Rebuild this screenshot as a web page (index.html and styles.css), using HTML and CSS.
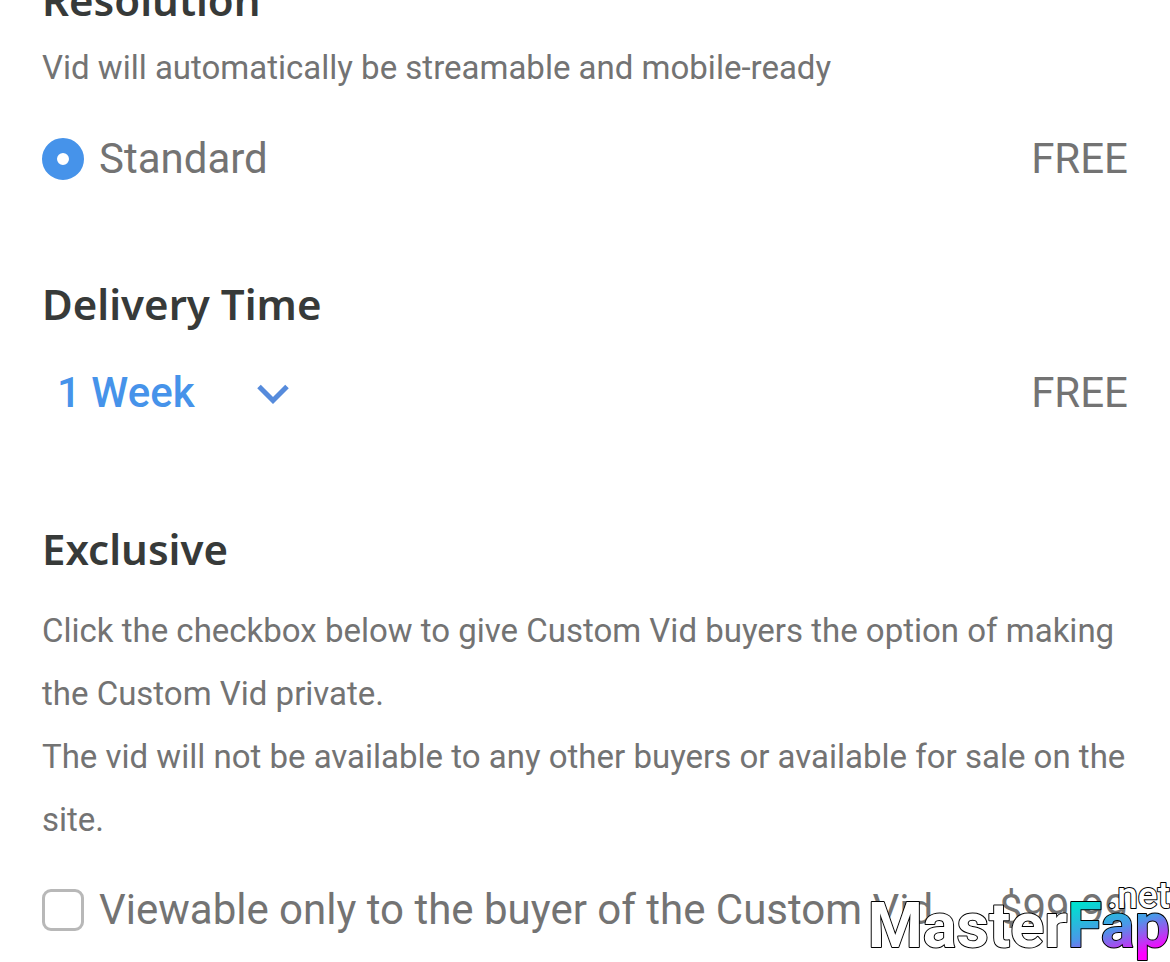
FILE: index.html
```html
<!DOCTYPE html>
<html lang="en">
<head>
<meta charset="UTF-8">
<meta name="viewport" content="width=device-width,initial-scale=1">
<title>Custom Vid options</title>
<link rel="stylesheet" href="styles.css">
</head>
<body>

<form class="options">
  <section class="resolution">
    <h2>Resolution</h2>
    <p class="note">Vid will automatically be streamable and mobile-ready</p>
    <div class="row">
      <label><input type="radio" name="resolution" checked> Standard</label>
      <span class="price">FREE</span>
    </div>
  </section>

  <section class="delivery">
    <h2><label for="delivery">Delivery Time</label></h2>
    <div class="row">
      <div class="picker">
        <select id="delivery">
          <option>1 Week</option>
        </select>
        <svg class="arrow" viewBox="0 0 32 20" aria-hidden="true"><path d="M2 2.500 16 16.500 30 2.500"/></svg>
      </div>
      <span class="price">FREE</span>
    </div>
  </section>

  <section class="exclusive">
    <h2>Exclusive</h2>
    <p class="text">Click the checkbox below to give Custom Vid buyers the option of making the Custom Vid private.<br>
    The vid will not be available to any other buyers or available for sale on the site.</p>
    <div class="row">
      <label><input type="checkbox" name="exclusive"> Viewable only to the buyer of the Custom Vid</label>
      <span class="price">$99.99</span>
    </div>
  </section>
</form>

<svg class="watermark" viewBox="0 0 304 82">
  <defs>
    <linearGradient id="fade" gradientUnits="userSpaceOnUse" x1="225" y1="20" x2="245" y2="84">
      <stop offset="0" stop-color="#00e0d0"/>
      <stop offset=".5" stop-color="#4a98e8"/>
      <stop offset=".75" stop-color="#a050f0"/>
      <stop offset="1" stop-color="#f0f"/>
    </linearGradient>
  </defs>
  <text class="net" x="304" y="28">.net</text>
  <text class="name" x="304" y="67">Master<tspan fill="url(#fade)">Fap</tspan></text>
</svg>

</body>
</html>
```
FILE: styles.css
```css
*{margin:0;padding:0;box-sizing:border-box}
body{background:#fff;color:#737373;font-family:Roboto,Arial,sans-serif;font-size:42px;overflow:hidden}
.options{padding:0 42px}

h2{font-family:"Noto Sans",sans-serif;font-size:42px;line-height:56px;font-weight:600;color:#373a39}
.note{font-size:33px;line-height:48px}
.text{font-size:33px;line-height:63px}

.row{display:flex;justify-content:space-between;align-items:center;height:56px}
.row label{display:flex;align-items:center;gap:15px;white-space:nowrap}

/* sections */
.resolution h2{margin-top:-28px}
.resolution .note{margin-top:16px}
.resolution .row{margin-top:38px}
.delivery{margin-top:90px}
.delivery .row{margin-top:32px}
.exclusive{margin-top:101px}
.exclusive .text{margin-top:22px}
.exclusive .row{margin-top:30px}

/* controls */
input{appearance:none;flex:none;width:42px;height:42px;margin-top:2px;background:#fff}
input[type=radio]{border:15px solid #4693ea;border-radius:50%}
input[type=checkbox]{border:3px solid #b8b8b8;border-radius:9px}
.picker{position:relative;display:flex;align-items:center}
select{appearance:none;width:258px;padding-left:15px;border:0;background:none;font:500 42px Roboto,Arial,sans-serif;color:#4693ea}
.arrow{position:absolute;right:11px;top:16px;width:32px;height:20px;pointer-events:none}
.arrow path{fill:none;stroke:#568bdc;stroke-width:5}

/* watermark over the corner */
.watermark{position:absolute;right:0;bottom:0;width:304px;height:82px;font-family:Roboto,Arial,sans-serif;pointer-events:none}
.watermark text{text-anchor:end;fill:#fff;stroke:#000;stroke-width:2px;stroke-linejoin:round;paint-order:stroke}
.name{font-size:63px;font-weight:700}
.net{font-size:37px;font-weight:500}
```
